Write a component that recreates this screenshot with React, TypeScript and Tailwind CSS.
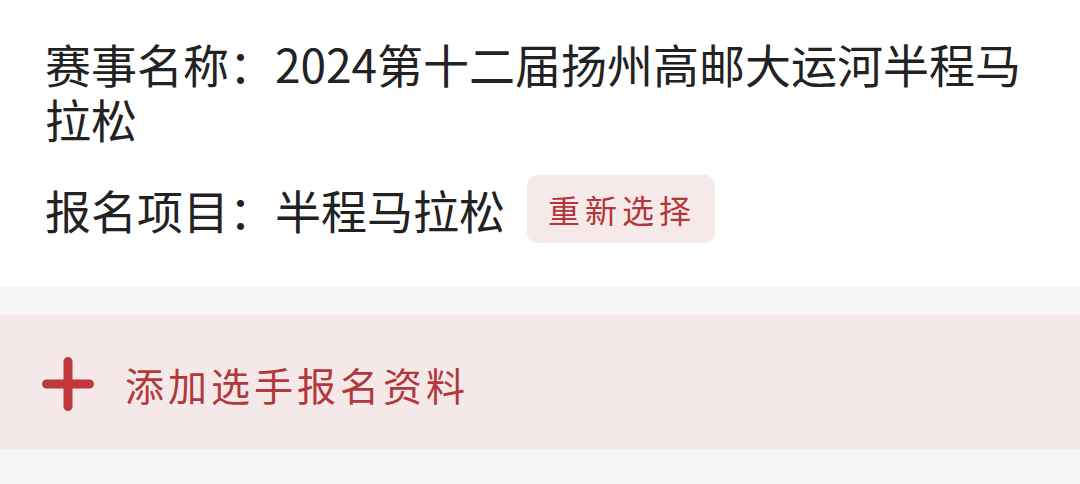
export default function App() {
  const font = { fontFamily: '"Noto Sans CJK SC", "Noto Sans", sans-serif' };

  return (
    <div className="w-[1080px] h-[484px] overflow-hidden bg-[#f5f5f5]" style={font}>
      {/* Event info */}
      <div className="bg-white px-[45px] pt-[36px] pb-[44px] text-[#222222]">
        <p className="text-[46px] leading-[55px]">赛事名称：2024第十二届扬州高邮大运河半程马拉松</p>
        <div className="mt-[29px] flex items-center">
          <span className="text-[46px] leading-[55px]">报名项目：半程马拉松</span>
          <button className="ml-[22px] h-[68px] rounded-[10px] bg-[#f6e9e9] pl-[21px] pr-[19px] text-[32px] tracking-[5px] text-[#b3363a]">
            重新选择
          </button>
        </div>
      </div>

      {/* Add participant */}
      <div className="mt-[28px] flex h-[134px] items-center bg-[#f4e8e8] pl-[42px] pt-[4px]">
        <svg width="52" height="54" viewBox="0 0 52 54" fill="none">
          <path d="M26 4.5V49.5M4.5 27H47.5" stroke="#c0383c" strokeWidth="9" strokeLinecap="round" />
        </svg>
        <span className="ml-[31px] text-[39px] leading-[50px] tracking-[4px] text-[#b2383c]">添加选手报名资料</span>
      </div>
    </div>
  );
}
